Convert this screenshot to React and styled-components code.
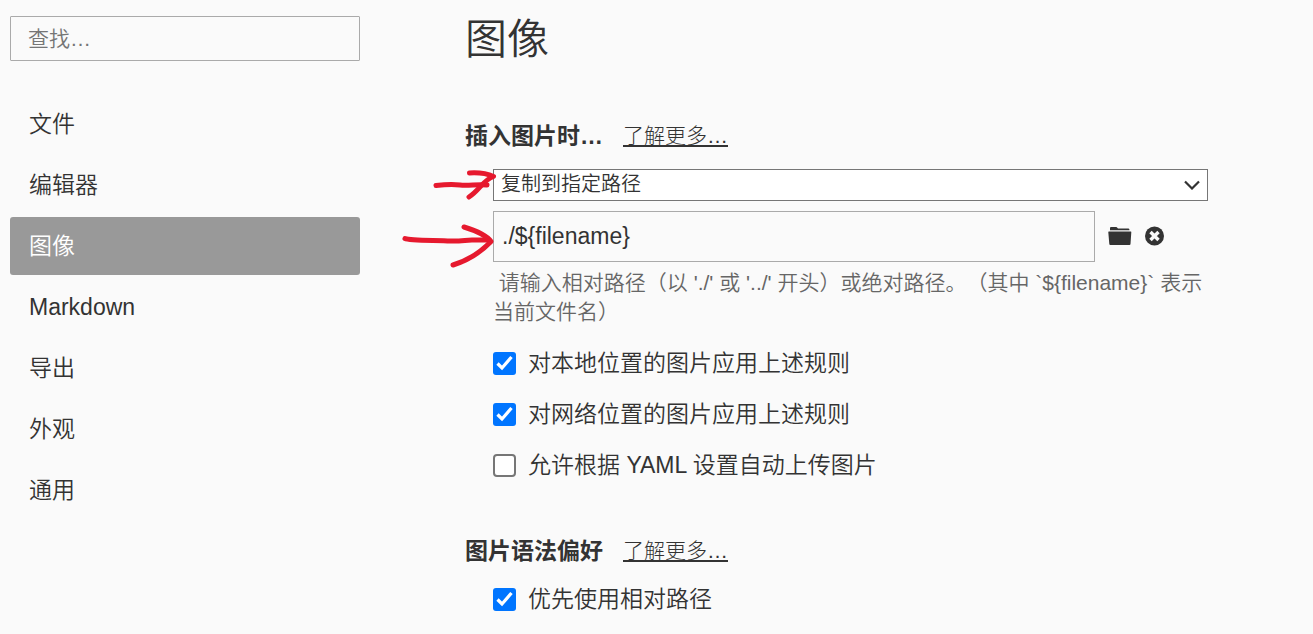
import React from "react";
import styled, { createGlobalStyle } from "styled-components";

const GlobalStyle = createGlobalStyle`
  *, *::before, *::after { box-sizing: border-box; }
  body {
    margin: 0;
    background: #fafafa;
    color: #333;
    font-family: "Liberation Sans", "Noto Sans CJK SC", sans-serif;
    font-size: 23px;
    font-weight: 350;
    text-spacing-trim: space-all;
  }
  input, select, button { font: inherit; color: inherit; }
`;

const Page = styled.div`
  display: flex;
  align-items: flex-start;
  gap: 105px;
  padding: 0 105px 20px 10px;
`;

const Sidebar = styled.aside`
  flex: 0 0 350px;
  padding-top: 16px;
`;

const SearchBox = styled.input`
  display: block;
  width: 100%;
  height: 45px;
  padding: 0 17px;
  border: 1px solid #aaa;
  border-radius: 1px;
  background: transparent;
  font-size: 21px;
  &::placeholder { color: #757575; opacity: 1; }
`;

const Menu = styled.nav`
  display: flex;
  flex-direction: column;
  gap: 3px;
  margin-top: 34px;
`;

const MenuLink = styled.a`
  padding: 0 19px;
  border-radius: 3px;
  line-height: 58px;
  text-decoration: none;
  color: ${(p) => (p.$active ? "#fff" : "#333")};
  background: ${(p) => (p.$active ? "#999" : "transparent")};
`;

const Content = styled.main`
  flex: 1;
  min-width: 0;
  padding-top: 8px;
`;

const Title = styled.h1`
  margin: 0;
  font-size: 42px;
  font-weight: 350;
  line-height: 64px;
`;

const Section = styled.section`
  margin-top: ${(p) => p.$space}px;
`;

const SectionHead = styled.div`
  display: flex;
  align-items: center;
  gap: 20px;
  line-height: 34px;
`;

const SectionTitle = styled.h2`
  margin: 0;
  font-size: 23px;
  font-weight: 700;
`;

const MoreLink = styled.a`
  font-size: 21px;
  font-weight: 300;
  color: #333;
  text-decoration: underline;
  text-decoration-thickness: 2px;
  text-underline-offset: 2px;
  text-decoration-skip-ink: none;
`;

const SectionBody = styled.div`
  position: relative;
  margin-top: 16px;
  padding-left: 28px;
`;

const SelectWrap = styled.div`
  display: grid;
  align-items: center;
  & > * { grid-area: 1 / 1; }
`;

const Select = styled.select`
  width: 100%;
  height: 32px;
  padding: 0 7px 2px;
  border: 1px solid #767676;
  border-radius: 0;
  background: #fff;
  font-size: 20px;
  appearance: none;
`;

const Chevron = styled.svg`
  justify-self: end;
  margin-right: 8px;
  pointer-events: none;
`;

const PathRow = styled.div`
  display: flex;
  align-items: center;
  gap: 13px;
  margin-top: 10px;
  padding-right: 43px;
`;

const PathInput = styled.input`
  flex: 1;
  min-width: 0;
  height: 51px;
  padding: 0 8px;
  border: 1px solid #aaa;
  border-radius: 0;
  background: transparent;
`;

const IconButton = styled.button`
  display: flex;
  padding: 0 0 2px;
  border: 0;
  background: none;
  cursor: pointer;
`;

const Hint = styled.p`
  margin: 6px 0 0;
  font-size: 21px;
  line-height: 29px;
  color: #666;
  white-space: pre-wrap;
`;

const Checks = styled.div`
  display: flex;
  flex-direction: column;
  gap: 21px;
  margin-top: ${(p) => p.$space}px;
`;

const CheckLabel = styled.label`
  display: flex;
  align-items: center;
  gap: 12px;
  line-height: 30px;
`;

const CheckBox = styled.input`
  appearance: none;
  width: 23px;
  height: 23px;
  margin: 0;
  border: 2px solid #767676;
  border-radius: 4px;
  background: #fff;
  &:checked {
    border: 0;
    border-radius: 3px;
    background: #0075ff
      url("data:image/svg+xml,%3Csvg xmlns='http://www.w3.org/2000/svg' viewBox='0 0 23 23'%3E%3Cpath d='M4.500 11.500 9 16 18.500 5' fill='none' stroke='white' stroke-width='3.200'/%3E%3C/svg%3E")
      center / 100% no-repeat;
  }
`;

const Arrows = styled.svg`
  position: absolute;
  left: -65px;
  top: -4px;
  pointer-events: none;
`;

const menu = ["文件", "编辑器", "图像", "Markdown", "导出", "外观", "通用"];

function Check({ checked, children }) {
  return (
    <CheckLabel>
      <CheckBox type="checkbox" defaultChecked={checked} />
      {children}
    </CheckLabel>
  );
}

export default function App() {
  return (
    <>
      <GlobalStyle />
      <Page>
        <Sidebar>
          <SearchBox type="text" placeholder="查找…" aria-label="查找" />
          <Menu>
            {menu.map((name) => (
              <MenuLink key={name} href="#" $active={name === "图像"}>
                {name}
              </MenuLink>
            ))}
          </Menu>
        </Sidebar>
        <Content>
          <Title>图像</Title>
          <Section $space={47}>
            <SectionHead>
              <SectionTitle>插入图片时…</SectionTitle>
              <MoreLink href="#">了解更多…</MoreLink>
            </SectionHead>
            <SectionBody>
              <SelectWrap>
                <Select aria-label="插入图片时">
                  <option>复制到指定路径</option>
                </Select>
                <Chevron width="16" height="10" viewBox="0 0 16 10" fill="none" stroke="#333" strokeWidth="2.200">
                  <path d="M1 1.500 8 8.500 15 1.500" />
                </Chevron>
              </SelectWrap>
              <PathRow>
                <PathInput type="text" defaultValue="./${filename}" aria-label="路径" />
                <IconButton type="button" aria-label="打开文件夹">
                  <svg width="24" height="20" viewBox="0 0 24 20" fill="#333">
                    <path d="M2 4.200V2Q2 1 3 1H8Q9 1 9.500 2L10 2.600H20.500Q21.500 2.600 21.500 4.200Z" />
                    <path d="M.8 5.600H22.800Q23.400 5.600 23.300 6.300L22.500 18Q22.400 19 21.500 19H2.300Q1.400 19 1.300 18L.3 6.300Q.3 5.600.8 5.600Z" />
                  </svg>
                </IconButton>
                <IconButton type="button" aria-label="清除">
                  <svg width="20" height="20" viewBox="0 0 20 20">
                    <circle cx="9.500" cy="10" r="9.500" fill="#333" />
                    <path d="M5.500 6 13.500 14M13.500 6 5.500 14" stroke="#fafafa" strokeWidth="3.400" />
                  </svg>
                </IconButton>
              </PathRow>
              <Hint>
                {" 请输入相对路径（以 './' 或 '../' 开头）或绝对路径。（其中 `${filename}` 表示当前文件名）"}
              </Hint>
              <Checks $space={22}>
                <Check checked>对本地位置的图片应用上述规则</Check>
                <Check checked>对网络位置的图片应用上述规则</Check>
                <Check>允许根据 YAML 设置自动上传图片</Check>
              </Checks>
              <Arrows
                width="100"
                height="105"
                viewBox="400 165 100 105"
                fill="none"
                stroke="#e6192e"
                strokeWidth="5"
                strokeLinecap="round"
                strokeLinejoin="round"
              >
                <path d="M436 185.500C445 184.500 452 184 460 185C468 186 478 184 487 185" />
                <path d="M469.500 173C478 172.500 488 174 493.500 176.500C483 180 480 190 469 197" />
                <path d="M405 238.500C410 241 440 240 450 241C460 241.500 466 240 472 240L488 240" />
                <path d="M464 227C477 231 487 236 491 241.500C480 253 466 261 453 265" />
              </Arrows>
            </SectionBody>
          </Section>
          <Section $space={54}>
            <SectionHead>
              <SectionTitle>图片语法偏好</SectionTitle>
              <MoreLink href="#">了解更多…</MoreLink>
            </SectionHead>
            <SectionBody>
              <Checks $space={0}>
                <Check checked>优先使用相对路径</Check>
              </Checks>
            </SectionBody>
          </Section>
        </Content>
      </Page>
    </>
  );
}
